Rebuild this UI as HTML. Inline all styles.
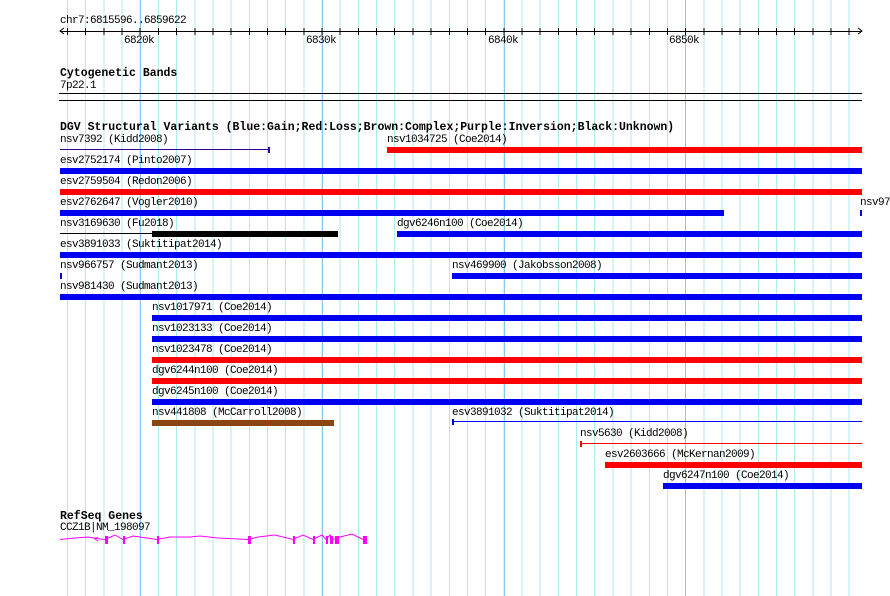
<!DOCTYPE html>
<html><head><meta charset="utf-8"><style>
body{margin:0;width:890px;height:596px;background:#fff;position:relative;overflow:hidden;font-family:"Liberation Mono",monospace;}
.a{position:absolute}
.t{position:absolute;font-size:11px;line-height:11px;letter-spacing:-0.6px;white-space:pre;color:#000}
.h{position:absolute;font-size:11.5px;line-height:12px;font-weight:bold;white-space:pre;color:#000}
.b{position:absolute;height:6px}
.bl{background:#0000f0}.rd{background:#ff0000}
</style></head><body>
<div class="a" style="left:67px;top:0;width:790px;height:596px;background:repeating-linear-gradient(90deg,#aeeaf0 0 1px,transparent 1px 18.18px)"></div>
<div class="a" style="left:140px;top:0;width:1px;height:596px;background:#8cc8ea"></div>
<div class="a" style="left:322px;top:0;width:1px;height:596px;background:#8cc8ea"></div>
<div class="a" style="left:504px;top:0;width:1px;height:596px;background:#8cc8ea"></div>
<div class="a" style="left:685px;top:0;width:1px;height:596px;background:#8cc8ea"></div>

<div class="t" style="left:60px;top:16px">chr7:6815596..6859622</div>
<div class="a" style="left:60px;top:31px;width:802px;height:1px;background:#000"></div>
<div class="a" style="left:67px;top:28px;width:790px;height:7px;background:repeating-linear-gradient(90deg,#000 0 1px,transparent 1px 18.18px)"></div>
<svg class="a" style="left:59px;top:27px" width="806" height="9"><path d="M5 1 L1 4 L5 7" fill="none" stroke="#000"/><path d="M799 1 L803 4 L799 7" fill="none" stroke="#000"/></svg>
<div class="t" style="left:124px;top:36px">6820k</div>
<div class="t" style="left:306px;top:36px">6830k</div>
<div class="t" style="left:488px;top:36px">6840k</div>
<div class="t" style="left:669px;top:36px">6850k</div>

<div class="h" style="left:60px;top:68px">Cytogenetic Bands</div>
<div class="t" style="left:60px;top:81px">7p22.1</div>
<div class="a" style="left:59px;top:93px;width:803px;height:1px;background:#000"></div>
<div class="a" style="left:59px;top:100px;width:803px;height:1px;background:#000"></div>

<div class="h" style="left:60px;top:122px">DGV Structural Variants (Blue:Gain;Red:Loss;Brown:Complex;Purple:Inversion;Black:Unknown)</div>

<div class="t" style="left:60px;top:135px">nsv7392 (Kidd2008)</div>
<div class="a" style="left:60px;top:149px;width:208px;height:1px;background:#330099"></div>
<div class="a" style="left:268px;top:147px;width:2px;height:6px;background:#330099"></div>
<div class="t" style="left:387px;top:135px">nsv1034725 (Coe2014)</div>
<div class="b rd" style="left:387px;top:147px;width:475px"></div>

<div class="t" style="left:60px;top:156px">esv2752174 (Pinto2007)</div>
<div class="b bl" style="left:60px;top:168px;width:802px"></div>
<div class="t" style="left:60px;top:177px">esv2759504 (Redon2006)</div>
<div class="b rd" style="left:60px;top:189px;width:802px"></div>
<div class="t" style="left:60px;top:198px">esv2762647 (Vogler2010)</div>
<div class="b bl" style="left:60px;top:210px;width:664px"></div>
<div class="t" style="left:860px;top:198px">nsv97</div>
<div class="b bl" style="left:860px;top:210px;width:2px"></div>

<div class="t" style="left:60px;top:219px">nsv3169630 (Fu2018)</div>
<div class="a" style="left:60px;top:233px;width:92px;height:1px;background:#000"></div>
<div class="b" style="left:152px;top:231px;width:184px;background:#000"></div>
<div class="a" style="left:336px;top:231px;width:2px;height:6px;background:#000"></div>
<div class="t" style="left:397px;top:219px">dgv6246n100 (Coe2014)</div>
<div class="b bl" style="left:397px;top:231px;width:465px"></div>

<div class="t" style="left:60px;top:240px">esv3891033 (Suktitipat2014)</div>
<div class="b bl" style="left:60px;top:252px;width:802px"></div>
<div class="t" style="left:60px;top:261px">nsv966757 (Sudmant2013)</div>
<div class="b bl" style="left:60px;top:273px;width:2px"></div>
<div class="t" style="left:452px;top:261px">nsv469900 (Jakobsson2008)</div>
<div class="b bl" style="left:452px;top:273px;width:410px"></div>
<div class="t" style="left:60px;top:282px">nsv981430 (Sudmant2013)</div>
<div class="b bl" style="left:60px;top:294px;width:802px"></div>

<div class="t" style="left:152px;top:303px">nsv1017971 (Coe2014)</div>
<div class="b bl" style="left:152px;top:315px;width:710px"></div>
<div class="t" style="left:152px;top:324px">nsv1023133 (Coe2014)</div>
<div class="b bl" style="left:152px;top:336px;width:710px"></div>
<div class="t" style="left:152px;top:345px">nsv1023478 (Coe2014)</div>
<div class="b rd" style="left:152px;top:357px;width:710px"></div>
<div class="t" style="left:152px;top:366px">dgv6244n100 (Coe2014)</div>
<div class="b rd" style="left:152px;top:378px;width:710px"></div>
<div class="t" style="left:152px;top:387px">dgv6245n100 (Coe2014)</div>
<div class="b bl" style="left:152px;top:399px;width:710px"></div>

<div class="t" style="left:152px;top:408px">nsv441808 (McCarroll2008)</div>
<div class="b" style="left:152px;top:420px;width:182px;background:#8b4513"></div>
<div class="t" style="left:452px;top:408px">esv3891032 (Suktitipat2014)</div>
<div class="a" style="left:452px;top:421px;width:410px;height:1px;background:#0000f0"></div>
<div class="a" style="left:452px;top:419px;width:2px;height:6px;background:#0000f0"></div>

<div class="t" style="left:580px;top:429px">nsv5630 (Kidd2008)</div>
<div class="a" style="left:580px;top:443px;width:282px;height:1px;background:#ff0000"></div>
<div class="a" style="left:580px;top:441px;width:2px;height:6px;background:#ff0000"></div>
<div class="t" style="left:605px;top:450px">esv2603666 (McKernan2009)</div>
<div class="b rd" style="left:605px;top:462px;width:257px"></div>
<div class="t" style="left:663px;top:471px">dgv6247n100 (Coe2014)</div>
<div class="b bl" style="left:663px;top:483px;width:199px"></div>

<div class="h" style="left:60px;top:511px">RefSeq Genes</div>
<div class="t" style="left:60px;top:523px">CCZ1B|NM_198097</div>
<svg class="a" style="left:0;top:530px" width="890" height="20">
<polyline fill="none" stroke="#ff00ff" stroke-width="1" points="60,9.5 75,8 88,7 100,9 105,9.5 115,5 123,9.5 133,6 140,7 157,9.5 170,7 190,7 200,6 218,8 248,9.5 258,7 275,5 293,9.5 303,5 313,9.5 322,5 326,9.5 330,5 333,9.5 340,7 352,4 363,9.5"/>
<path d="M98 7 L95 9 L98 11" fill="none" stroke="#ff00ff"/>
<g fill="#ff00ff">
<rect x="105" y="6" width="3" height="8"/>
<rect x="123" y="6" width="2" height="8"/>
<rect x="157" y="6" width="2" height="8"/>
<rect x="248" y="6" width="3" height="8"/>
<rect x="293" y="6" width="2" height="8"/>
<rect x="313" y="6" width="2" height="8"/>
<rect x="326" y="6" width="2" height="8"/>
<rect x="330" y="6" width="3" height="8"/>
<rect x="335" y="6" width="4" height="8"/>
<rect x="363" y="6" width="4" height="8"/>
</g></svg>
</body></html>
